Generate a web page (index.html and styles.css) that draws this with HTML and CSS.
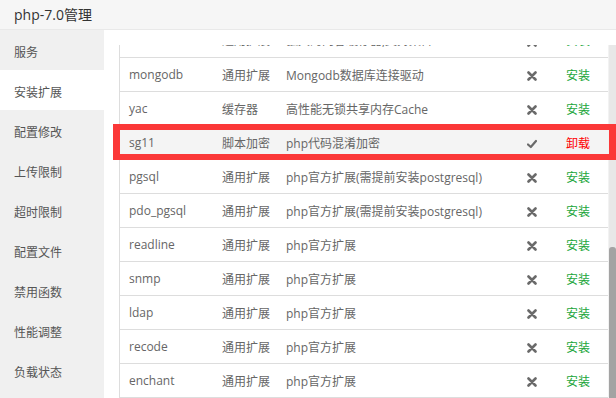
FILE: index.html
```html
<!DOCTYPE html>
<html lang="zh-CN">
<head>
<meta charset="utf-8">
<title>php-7.0管理</title>
<link rel="stylesheet" href="styles.css">
</head>
<body>
<div class="win">
  <div class="title">php-7.0管理</div>
  <div class="main">
    <ul class="side">
      <li>服务</li>
      <li class="on">安装扩展</li>
      <li>配置修改</li>
      <li>上传限制</li>
      <li>超时限制</li>
      <li>配置文件</li>
      <li>禁用函数</li>
      <li>性能调整</li>
      <li>负载状态</li>
    </ul>
    <div class="content">
      <div class="scroller">
        <div class="viewport">
          <table class="tbl">
            <colgroup><col class="c1"><col class="c2"><col class="c3"><col class="c4"><col class="c5"></colgroup>
            <tbody>
              <tr><td>memcache</td><td>通用扩展</td><td>强大的内容缓存器,支持集群</td><td><svg class="ic" viewBox="0 0 10 10"><path d="M1.5 1.5L8.5 8.5M8.5 1.5L1.5 8.5"/></svg></td><td class="act"><a class="ins">安装</a></td></tr>
              <tr><td>mongodb</td><td>通用扩展</td><td>Mongodb数据库连接驱动</td><td><svg class="ic" viewBox="0 0 10 10"><path d="M1.5 1.5L8.5 8.5M8.5 1.5L1.5 8.5"/></svg></td><td class="act"><a class="ins">安装</a></td></tr>
              <tr><td>yac</td><td>缓存器</td><td>高性能无锁共享内存Cache</td><td><svg class="ic" viewBox="0 0 10 10"><path d="M1.5 1.5L8.5 8.5M8.5 1.5L1.5 8.5"/></svg></td><td class="act"><a class="ins">安装</a></td></tr>
              <tr class="hl"><td>sg11</td><td>脚本加密</td><td>php代码混淆加密</td><td><svg class="ic ok" viewBox="0 0 10 10"><path d="M1 5.5L3.8 8L9 2"/></svg></td><td class="act"><a class="del">卸载</a></td></tr>
              <tr><td>pgsql</td><td>通用扩展</td><td>php官方扩展(需提前安装postgresql)</td><td><svg class="ic" viewBox="0 0 10 10"><path d="M1.5 1.5L8.5 8.5M8.5 1.5L1.5 8.5"/></svg></td><td class="act"><a class="ins">安装</a></td></tr>
              <tr><td>pdo_pgsql</td><td>通用扩展</td><td>php官方扩展(需提前安装postgresql)</td><td><svg class="ic" viewBox="0 0 10 10"><path d="M1.5 1.5L8.5 8.5M8.5 1.5L1.5 8.5"/></svg></td><td class="act"><a class="ins">安装</a></td></tr>
              <tr><td>readline</td><td>通用扩展</td><td>php官方扩展</td><td><svg class="ic" viewBox="0 0 10 10"><path d="M1.5 1.5L8.5 8.5M8.5 1.5L1.5 8.5"/></svg></td><td class="act"><a class="ins">安装</a></td></tr>
              <tr><td>snmp</td><td>通用扩展</td><td>php官方扩展</td><td><svg class="ic" viewBox="0 0 10 10"><path d="M1.5 1.5L8.5 8.5M8.5 1.5L1.5 8.5"/></svg></td><td class="act"><a class="ins">安装</a></td></tr>
              <tr><td>ldap</td><td>通用扩展</td><td>php官方扩展</td><td><svg class="ic" viewBox="0 0 10 10"><path d="M1.5 1.5L8.5 8.5M8.5 1.5L1.5 8.5"/></svg></td><td class="act"><a class="ins">安装</a></td></tr>
              <tr><td>recode</td><td>通用扩展</td><td>php官方扩展</td><td><svg class="ic" viewBox="0 0 10 10"><path d="M1.5 1.5L8.5 8.5M8.5 1.5L1.5 8.5"/></svg></td><td class="act"><a class="ins">安装</a></td></tr>
              <tr><td>enchant</td><td>通用扩展</td><td>php官方扩展</td><td><svg class="ic" viewBox="0 0 10 10"><path d="M1.5 1.5L8.5 8.5M8.5 1.5L1.5 8.5"/></svg></td><td class="act"><a class="ins">安装</a></td></tr>
              <tr><td>imap</td><td>通用扩展</td><td>php官方扩展</td><td><svg class="ic" viewBox="0 0 10 10"><path d="M1.5 1.5L8.5 8.5M8.5 1.5L1.5 8.5"/></svg></td><td class="act"><a class="ins">安装</a></td></tr>
            </tbody>
          </table>
        </div>
        <div class="sbar"><div class="sb-space"></div><div class="sb-thumb"></div></div>
      </div>
      <div class="mark"></div>
    </div>
  </div>
</div>
</body>
</html>
```
FILE: styles.css
```css
* { box-sizing: border-box; }
html, body { margin: 0; padding: 0; }
body {
  width: 616px; height: 398px; overflow: hidden; background: #fff;
  font-family: "Open Sans", "Noto Sans CJK SC", sans-serif;
  font-size: 12px; color: #666;
}
.win { display: flex; flex-direction: column; height: 398px; }
.title {
  height: 30px; flex: none; background: #f6f6f6; border-bottom: 1px solid #e9e9e9;
  padding-left: 14px; font-size: 14px; color: #333; line-height: 30px;
}
.main { flex: 1; display: flex; min-height: 0; }
.side {
  list-style: none; margin: 0; padding: 0; width: 104px; flex: none;
  background: #f0f0f0;
}
.side li { height: 40px; line-height: 34px; padding: 6px 0 0 14px; color: #555; }
.side li.on { background: #fff; }
.content { flex: 1; position: relative; padding: 15px 0 0 15px; min-width: 0; }
.scroller { display: flex; height: 100%; }
.viewport { flex: 1; overflow: hidden; border-left: 1px solid #ddd; min-width: 0; }
.tbl {
  width: 100%; border-collapse: collapse; table-layout: fixed; margin-top: -22px;
}
.c1 { width: 93px; } .c2 { width: 64px; } .c3 { width: 235px; } .c4 { width: 40px; }
.tbl td {
  height: 34px; padding: 1px 0 0 9px; border-bottom: 1px solid #ddd;
  white-space: nowrap; overflow: hidden; color: #666;
}
.tbl td:nth-child(4) { text-align: center; padding: 2px 0 0 0; }
.tbl td.act { text-align: right; padding: 1px 18px 0 0; }
.tbl tr.hl td { background: #f4f4f4; }
.ic { width: 10px; height: 10px; display: inline-block; vertical-align: middle; }
.ic path { fill: none; stroke: #6a6a6a; stroke-width: 2.6; stroke-linecap: round; stroke-linejoin: round; }
.ic.ok path { stroke-width: 2.2; }
.ins { color: #20a53a; }
.del { color: #f00; }
.sbar {
  width: 8px; flex: none; display: flex; flex-direction: column;
  background: #e8e8e8; border-left: 1px solid #f2f2f2;
}
.sb-space { height: 202px; flex: none; }
.sb-thumb { flex: 1; background: #a3a3a3; border-radius: 3px 3px 0 0; }
.mark {
  position: absolute; left: 9px; top: 94px; width: 503px; height: 36px;
  border: 6px solid #fb3838; border-left-width: 7px; border-right-width: 7px;
}
```
